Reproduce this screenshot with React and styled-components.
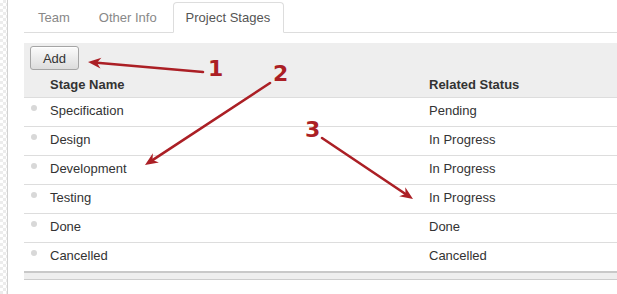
import React from 'react';
import styled, { createGlobalStyle } from 'styled-components';

const GlobalStyles = createGlobalStyle`
  html, body {
    margin: 0;
    padding: 0;
    background: #fff;
  }
  body {
    font-family: "Liberation Sans", Arial, sans-serif;
    font-size: 13px;
    color: #333;
  }
`;

const Page = styled.div`
  position: relative;
  display: flex;
  width: 617px;
  height: 294px;
  overflow: hidden;
`;

const Strip = styled.div`
  width: 7px;
  flex: none;
  border-right: 1px solid #d2d2d2;
  background-color: #fff;
  background-image: repeating-conic-gradient(#ececec 0 25%, #fff 0 50%);
  background-size: 6px 6px;
`;

const Main = styled.div`
  flex: 1;
  padding: 2px 0 0 16px;
  min-width: 0;
`;

const TabBar = styled.div`
  display: flex;
  gap: 3px;
  padding-left: 1px;
  border-bottom: 1px solid #ddd;
  height: 30px;
`;

const Tab = styled.div`
  padding: 7px 12px 8px;
  line-height: 15px;
  height: 31px;
  box-sizing: border-box;
  color: ${p => (p.$active ? '#555' : '#888')};
  background: ${p => (p.$active ? '#fff' : 'transparent')};
  border: 1px solid ${p => (p.$active ? '#ddd' : 'transparent')};
  border-bottom-color: ${p => (p.$active ? '#fff' : 'transparent')};
  border-radius: 4px 4px 0 0;
  padding-right: ${p => (p.$active ? '13px' : '12px')};
`;

const Panel = styled.div`
  margin-top: 10px;
  background: #eee;
  padding-top: 3px;
  border-bottom: 1px solid #ccc;
`;

const Toolbar = styled.div`
  padding-left: 6px;
  height: 24px;
`;

const Button = styled.button`
  width: 49px;
  height: 24px;
  font-family: inherit;
  font-size: 13px;
  color: #333;
  border: 1px solid #a5a5a5;
  border-radius: 3px;
  background: linear-gradient(#fbfbfb, #dcdcdc);
  box-shadow: inset 0 1px 0 #fff;
  padding: 0;
`;

const Grid = styled.div`
  display: grid;
  grid-template-columns: 397px 1fr;
  height: ${p => (p.$head ? '27px' : '28px')};
  align-items: ${p => (p.$head ? 'end' : 'start')};
  background: ${p => (p.$head ? 'transparent' : '#fff')};
  border-bottom: ${p => (p.$last ? 'none' : '1px solid #ddd')};
  font-weight: ${p => (p.$head ? 'bold' : 'normal')};
  line-height: 15px;
`;

const NameCell = styled.div`
  display: flex;
  align-items: flex-start;
  padding: ${p => (p.$head ? '0 0 5px 26px' : '5px 0 0 7px')};
`;

const StatusCell = styled.div`
  padding: ${p => (p.$head ? '0 0 5px 8px' : '5px 0 0 8px')};
`;

const Bullet = styled.span`
  width: 6px;
  height: 6px;
  margin: 2px 13px 0 0;
  border-radius: 50%;
  background: #d8d8d8;
  flex: none;
`;

const Footer = styled.div`
  height: 6px;
  border-top: 2px solid #c8c8c8;
`;

const Overlay = styled.svg`
  position: absolute;
  left: 0;
  top: 0;
  pointer-events: none;
`;

const Label = styled.text`
  font-family: "DejaVu Sans", sans-serif;
  font-weight: bold;
  font-size: 22px;
  fill: #ab1f25;
`;

const stages = [
  ['Specification', 'Pending'],
  ['Design', 'In Progress'],
  ['Development', 'In Progress'],
  ['Testing', 'In Progress'],
  ['Done', 'Done'],
  ['Cancelled', 'Cancelled'],
];

const arrows = [
  { from: [203, 72], to: [88, 62], label: '1', at: [208, 76] },
  { from: [270, 83], to: [145, 165], label: '2', at: [273, 81] },
  { from: [322, 138], to: [413, 199], label: '3', at: [305, 137] },
];

// arrow head with a small notch, like the screenshot tool draws
const headPoints = (from, to) => {
  const dx = to[0] - from[0];
  const dy = to[1] - from[1];
  const len = Math.hypot(dx, dy);
  const ux = dx / len, uy = dy / len;
  const nx = -uy, ny = ux;
  const L = 13, W = 5.5, N = 9;
  const pts = [
    to,
    [to[0] - L * ux + W * nx, to[1] - L * uy + W * ny],
    [to[0] - N * ux, to[1] - N * uy],
    [to[0] - L * ux - W * nx, to[1] - L * uy - W * ny],
  ];
  return pts.map(p => p.join(',')).join(' ');
};

const Annotations = () => (
  <Overlay width="617" height="294" viewBox="0 0 617 294">
    {arrows.map(a => {
      const dx = a.to[0] - a.from[0], dy = a.to[1] - a.from[1];
      const len = Math.hypot(dx, dy);
      const end = [a.to[0] - (dx / len) * 9, a.to[1] - (dy / len) * 9];
      return (
        <g key={a.label}>
          <line x1={a.from[0]} y1={a.from[1]} x2={end[0]} y2={end[1]} stroke="#ab1f25" strokeWidth="2.6" strokeLinecap="round" />
          <polygon points={headPoints(a.from, a.to)} fill="#ab1f25" />
          <Label x={a.at[0]} y={a.at[1]}>{a.label}</Label>
        </g>
      );
    })}
  </Overlay>
);

const App = () => {
  return (
    <Page>
      <GlobalStyles />
      <Strip />
      <Main>
        <TabBar>
          <Tab>Team</Tab>
          <Tab>Other Info</Tab>
          <Tab $active>Project Stages</Tab>
        </TabBar>
        <Panel>
          <Toolbar>
            <Button>Add</Button>
          </Toolbar>
          <Grid $head>
            <NameCell $head>Stage Name</NameCell>
            <StatusCell $head>Related Status</StatusCell>
          </Grid>
          {stages.map(([name, status], i) => (
            <Grid key={name} $last={i === stages.length - 1}>
              <NameCell><Bullet />{name}</NameCell>
              <StatusCell>{status}</StatusCell>
            </Grid>
          ))}
          <Footer />
        </Panel>
      </Main>
      <Annotations />
    </Page>
  );
};

export default App;
